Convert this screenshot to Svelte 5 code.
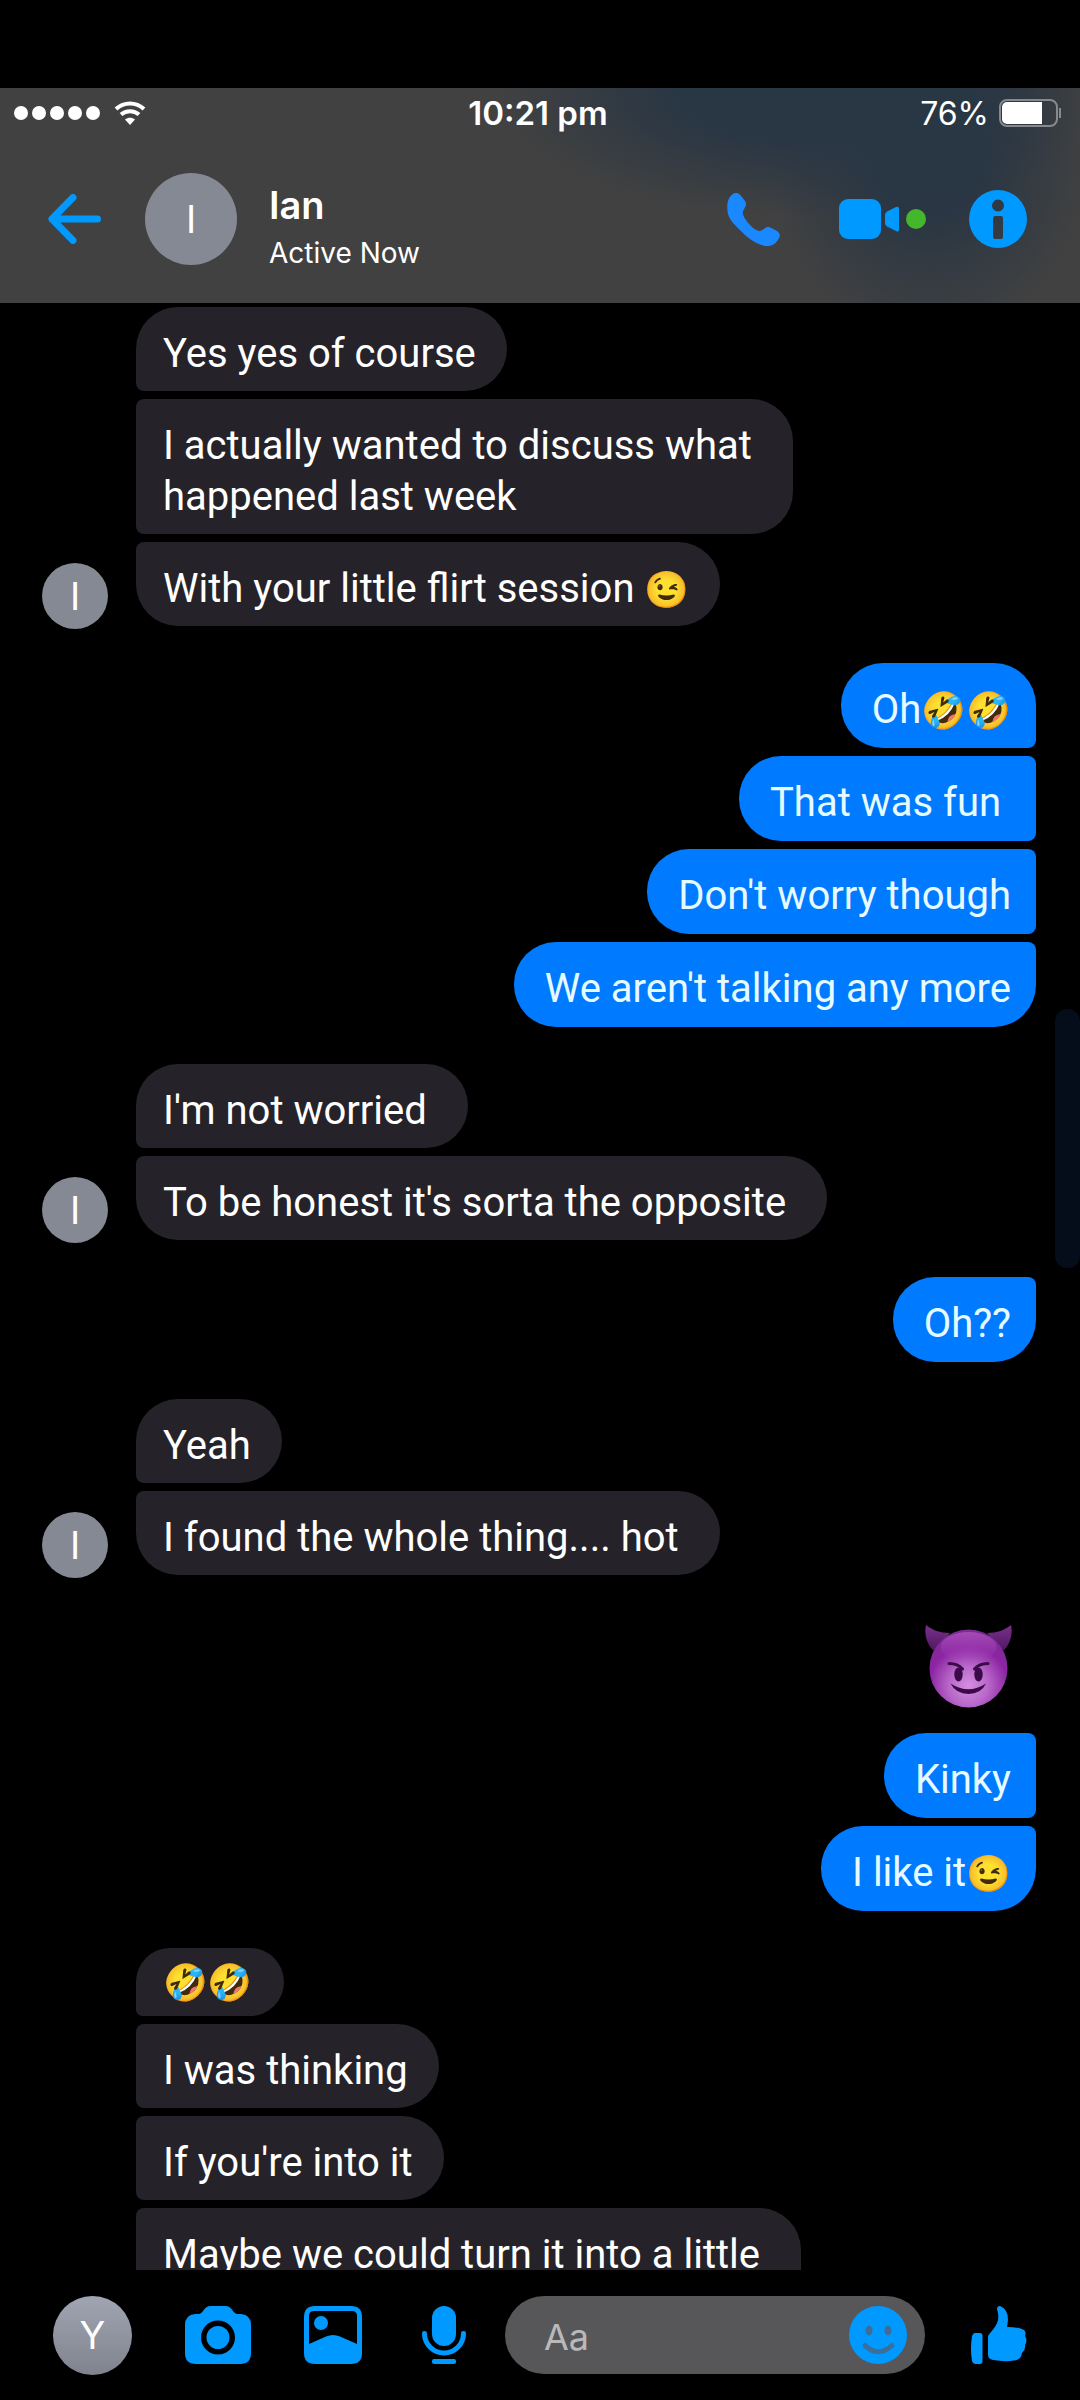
<script lang="ts">
  type Message = { text: string; kind?: 'emoji' | 'devil' };
  type Group = { from: 'them' | 'me'; avatar?: boolean; messages: Message[] };

  const contact = { name: 'Ian', initial: 'I', status: 'Active Now' };
  const battery = 76;

  let draft = $state('');

  const groups: Group[] = [
    {
      from: 'them',
      avatar: true,
      messages: [
        { text: 'Yes yes of course' },
        { text: 'I actually wanted to discuss what \nhappened last week' },
        { text: 'With your little flirt session 😉' }
      ]
    },
    {
      from: 'me',
      messages: [
        { text: 'Oh🤣🤣' },
        { text: 'That was fun ' },
        { text: "Don't worry though" },
        { text: "We aren't talking any more" }
      ]
    },
    {
      from: 'them',
      avatar: true,
      messages: [
        { text: "I'm not worried " },
        { text: "To be honest it's sorta the opposite " }
      ]
    },
    { from: 'me', messages: [{ text: 'Oh??' }] },
    {
      from: 'them',
      avatar: true,
      messages: [{ text: 'Yeah' }, { text: 'I found the whole thing.... hot ' }]
    },
    {
      from: 'me',
      messages: [{ text: '😈', kind: 'devil' }, { text: 'Kinky' }, { text: 'I like it😉' }]
    },
    {
      from: 'them',
      messages: [
        { text: '🤣🤣', kind: 'emoji' },
        { text: 'I was thinking' },
        { text: "If you're into it" },
        { text: 'Maybe we could turn it into a little \n ' }
      ]
    }
  ];

  // odd entries are the emoji, the rest is plain text
  function splitEmoji(text: string) {
    return text.split(/(\p{Extended_Pictographic}+)/u);
  }
</script>

<div class="phone">
  <header>
    <div class="statusbar">
      <div class="signal">
        {#each Array(5) as _, i (i)}
          <span class="dot"></span>
        {/each}
        <svg class="wifi" width="32" height="25" viewBox="0 0 32 25">
          <path d="M2 8C10 0.5 22 0.500 30 8" />
          <path d="M7 13.500C12 9 20 9 25 13.500" />
          <path class="fan" d="M11 18.500C14 16 18 16 21 18.500L16 24Z" />
        </svg>
      </div>
      <time>10:21 pm</time>
      <div class="power">
        <span>{battery}%</span>
        <span class="battery"><span class="charge" style="width: {battery}%"></span></span>
      </div>
    </div>

    <div class="topbar">
      <button class="back" aria-label="Back">
        <svg width="53" height="50" viewBox="0 0 53 50">
          <path d="M49.500 25H4M25 3.500L4 25L25 46.500" />
        </svg>
      </button>
      <span class="avatar large">{contact.initial}</span>
      <div class="who">
        <h1>{contact.name}</h1>
        <p>{contact.status}</p>
      </div>
      <button class="call" aria-label="Call">
        <svg width="53" height="53" viewBox="0 0 53 53">
          <path d="M1 21C-1 12 1 4 6 1C9 -1 12 0 14 3L18 8C20 11 19 13 16.500 17C15 20 16 23 19 27C23 33 28 37 32 38C35 38.500 37 35 40 34C42 33.500 44 34.500 50 38C53 40 53.500 43 52 45C49 51 45 53 41 53C33 53 24 48 16 40C8 32 3 28 1 21Z" />
        </svg>
      </button>
      <button class="video" aria-label="Video call">
        <svg width="60" height="40" viewBox="0 0 60 40">
          <rect width="42" height="40" rx="9" />
          <path d="M46 16Q46 14 48 12.500L57 8Q60 7 60 10V30Q60 34 57 32L48 27.500Q46 26 46 24Z" />
        </svg>
        <span class="online"></span>
      </button>
      <button class="info" aria-label="Conversation info">
        <svg width="58" height="58" viewBox="0 0 58 58">
          <path fill-rule="evenodd" d="M29 0A29 29 0 0 1 29 58A29 29 0 0 1 29 0ZM29 9.500A6 6 0 0 0 29 21.500A6 6 0 0 0 29 9.500ZM26 26Q24 26 24 28V47Q24 49 26 49H32Q34 49 34 47V28Q34 26 32 26Z" />
        </svg>
      </button>
    </div>
  </header>

  <main>
    {#each groups as group, g (g)}
      <section class="group {group.from}">
        {#if group.avatar}
          <span class="avatar small">{contact.initial}</span>
        {/if}
        <div class="bubbles">
          {#each group.messages as message, m (m)}
            {#if message.kind === 'devil'}
              <div class="sticker">
                <svg width="87" height="83" viewBox="0 0 87 83" role="img" aria-label={message.text}>
                  <defs>
                    <radialGradient id="skin" cx="0.5" cy="0.72" r="0.72">
                      <stop offset="0" stop-color="#d68ee0" />
                      <stop offset="0.35" stop-color="#b868c9" />
                      <stop offset="0.7" stop-color="#8c25a3" />
                      <stop offset="1" stop-color="#7d2a92" />
                    </radialGradient>
                    <linearGradient id="shine" x1="0" y1="0" x2="0" y2="1">
                      <stop offset="0" stop-color="#a94fba" stop-opacity="0.9" />
                      <stop offset="1" stop-color="#a33cb5" stop-opacity="0" />
                    </linearGradient>
                    <linearGradient id="horn" x1="0" y1="0" x2="0" y2="1">
                      <stop offset="0" stop-color="#7a3189" />
                      <stop offset="1" stop-color="#4f1763" />
                    </linearGradient>
                  </defs>
                  <path fill="url(#horn)" d="M1 0C7 5 15 8 25 8L9 26C2 20 -1 10 1 0Z" />
                  <path fill="url(#horn)" d="M86 0C80 5 72 8 62 8L78 26C85 20 88 10 86 0Z" />
                  <circle cx="43.500" cy="43.500" r="39" fill="url(#skin)" />
                  <ellipse cx="43.500" cy="22" rx="28" ry="15" fill="url(#shine)" />
                  <ellipse class="ink" cx="33.500" cy="49.500" rx="4.200" ry="7" />
                  <ellipse class="ink" cx="53.500" cy="49.500" rx="4.200" ry="7" />
                  <path class="brow" d="M24 38.500Q33 38.500 37.500 44M63 38.500Q54 38.500 49.500 44" />
                  <path class="ink" d="M25.500 58.500Q43.500 70 61 58.500Q56 69 43.500 69T25.500 58.500Z" />
                </svg>
              </div>
            {:else}
              <p class="bubble {message.kind ?? ''}">
                {#each splitEmoji(message.text) as part, i (i)}{#if i % 2}<span class="glyph">{part}</span>{:else}{part}{/if}{/each}
              </p>
            {/if}
          {/each}
        </div>
      </section>
    {/each}
    <span class="thumb"></span>
  </main>

  <footer>
    <span class="avatar own">Y</span>
    <button class="camera" aria-label="Camera">
      <svg width="66" height="58" viewBox="0 0 66 58">
        <path fill-rule="evenodd" d="M10 8H13C19 8 18 0 26 0H40C48 0 47 8 53 8H56Q66 9 66 19V47Q66 58 55 58H11Q0 58 0 47V19Q0 9 10 8ZM33 14.500A17 17 0 0 0 33 48.500A17 17 0 0 0 33 14.500Z" />
        <circle cx="33" cy="31.500" r="11.500" />
      </svg>
    </button>
    <button class="gallery" aria-label="Photos">
      <svg width="58" height="58" viewBox="0 0 58 58">
        <path fill-rule="evenodd" d="M11 0H47Q58 0 58 11V47Q58 58 47 58H11Q0 58 0 47V11Q0 0 11 0ZM10 5Q5 5 5 10V38L22 30.500Q29 27.500 36 30.500L53 38V10Q53 5 48 5Z" />
        <circle cx="17" cy="17" r="7" />
      </svg>
    </button>
    <button class="mic" aria-label="Voice message">
      <svg width="44" height="58" viewBox="0 0 44 58">
        <rect x="10" width="24" height="40" rx="12" />
        <path class="line" d="M2.500 27.500A19.500 19.500 0 0 0 41.500 27.500" />
        <rect x="10" y="53" width="24" height="5" rx="2" />
      </svg>
    </button>
    <div class="field">
      <input type="text" bind:value={draft} placeholder="Aa" aria-label="Message" />
      <button class="smile" aria-label="Emoji">
        <svg width="58" height="58" viewBox="0 0 58 58">
          <circle cx="29" cy="29" r="29" />
          <ellipse class="face" cx="20" cy="24.500" rx="3.500" ry="5" />
          <ellipse class="face" cx="39" cy="24.500" rx="3.500" ry="5" />
          <path class="mouth" d="M16 39.500Q29 52 43 39.500" />
        </svg>
      </button>
    </div>
    <button class="like" aria-label="Like">
      <svg width="56" height="58" viewBox="0 0 56 58">
        <path d="M4 27H9Q11.500 27 11.500 30V55Q11.500 58 9 58H4Q2 58 1 55Q-1 43 1 30Q2 27 4 27Z" />
        <path d="M26 3Q26 0 29 0Q37 3 37 14L36 21Q45 21 51 23Q56 25 54 30Q57 34 54 39Q55 43 51 47Q50 54 43 54.500Q33 56 22 54Q17 53 17 49V31Q17 29 20 26Q26 19 27 14Q28 9 26 3Z" />
      </svg>
    </button>
  </footer>
</div>

<style>
  :global(body) {
    background: #000;
  }

  .phone {
    box-sizing: border-box;
    display: flex;
    flex-direction: column;
    height: 100vh;
    padding-top: 88px;
    background: #000;
    color: #fff;
    font-family: Inter, 'Liberation Sans', 'Noto Color Emoji', sans-serif;
  }

  button {
    display: flex;
    align-items: center;
    flex: none;
    margin: 0;
    padding: 0;
    border: none;
    background: none;
    color: inherit;
    cursor: pointer;
  }

  svg {
    display: block;
    flex: none;
    fill: #0099ff;
  }

  header {
    flex: none;
    padding-bottom: 3px;
    background:
      radial-gradient(ellipse 28% 60% at 74% 0%, #293644 40%, transparent 100%),
      radial-gradient(ellipse 15% 90% at 86% 28%, #2a3643 35%, transparent 100%),
      #414141;
  }

  .statusbar {
    display: grid;
    grid-template-columns: 1fr auto 1fr;
    align-items: center;
    height: 50px;
    padding: 0 18px 0 14px;
    font-size: 32px;
  }

  .signal {
    display: flex;
    align-items: center;
    gap: 4px;
  }

  .dot {
    width: 14px;
    height: 14px;
    border-radius: 50%;
    background: #fff;
  }

  .wifi {
    margin-left: 10px;
    fill: none;
    stroke: #fff;
    stroke-width: 4;
  }

  .wifi .fan {
    fill: #fff;
    stroke: none;
  }

  time {
    font-size: 33px;
    font-weight: 600;
  }

  .power {
    display: flex;
    align-items: center;
    justify-content: flex-end;
    gap: 10px;
  }

  .battery {
    position: relative;
    box-sizing: border-box;
    width: 59px;
    height: 28px;
    margin-right: 4px;
    padding: 1px;
    border: 2px solid #87898c;
    border-radius: 8px;
  }

  .battery::after {
    content: '';
    position: absolute;
    top: 7px;
    right: -5px;
    width: 2px;
    height: 10px;
    background: #87898c;
  }

  .charge {
    display: block;
    height: 100%;
    border-radius: 5px 0 0 5px;
    background: #fff;
  }

  .topbar {
    display: flex;
    align-items: center;
    height: 162px;
    padding: 0 53px 0 48px;
  }

  .back path {
    fill: none;
    stroke: #0099ff;
    stroke-width: 7;
    stroke-linecap: round;
    stroke-linejoin: round;
  }

  .avatar {
    display: flex;
    align-items: center;
    justify-content: center;
    flex: none;
    border-radius: 50%;
    background: #858994;
    font-size: 38px;
  }

  .avatar.large {
    width: 92px;
    height: 92px;
    margin: 0 32px 0 44px;
  }

  .who {
    flex: 1;
    padding-top: 16px;
  }

  h1,
  p {
    margin: 0;
  }

  h1 {
    font-size: 38px;
    font-weight: 600;
    line-height: 44px;
  }

  .who p {
    margin-top: 8px;
    font-size: 28px;
    line-height: 36px;
  }

  .call svg {
    fill: #1a88ff;
  }

  .video {
    gap: 7px;
    margin: 0 43px 0 59px;
  }

  .online {
    width: 20px;
    height: 20px;
    border-radius: 50%;
    background: #44b72c;
  }

  main {
    position: relative;
    display: flex;
    flex: 1;
    flex-direction: column;
    gap: 37px;
    min-height: 0;
    overflow: hidden;
    padding: 4px 44px 0 42px;
  }

  .group {
    display: flex;
    align-items: flex-end;
    flex: none;
  }

  .bubbles {
    display: flex;
    flex: 1;
    flex-direction: column;
    align-items: flex-start;
    gap: 8px;
  }

  .them .bubbles {
    padding-left: 94px;
  }

  .me .bubbles {
    align-items: flex-end;
  }

  .avatar.small {
    width: 66px;
    height: 66px;
    margin: 0 -66px -3px 0;
  }

  .bubble {
    box-sizing: border-box;
    padding: 21px 31px 12px 27px;
    border-radius: 8px 42px 42px 8px;
    background: #252329;
    font-family: Roboto, 'Liberation Sans', 'Noto Color Emoji', sans-serif;
    font-size: 40px;
    line-height: 51px;
    white-space: break-spaces;
  }

  .bubble:first-child {
    border-top-left-radius: 42px;
  }

  .bubble:last-child {
    border-bottom-left-radius: 42px;
  }

  .glyph {
    font-size: 36px;
    line-height: 36px;
  }

  .me .bubble {
    padding: 21px 25px 13px 31px;
    border-radius: 42px 8px 8px 42px;
    background: #007aff;
    color: #e6fbff;
  }

  .me .bubble:first-child:not(:only-child) {
    border-top-right-radius: 42px;
  }

  .me .bubble:last-child {
    border-bottom-right-radius: 42px;
  }

  .them .bubble.emoji {
    padding: 8px 31px 9px 27px;
  }

  .sticker {
    padding: 13px 24px 17px;
  }

  .ink {
    fill: #3a0b48;
  }

  .brow {
    fill: none;
    stroke: #3a0b48;
    stroke-width: 3;
    stroke-linecap: round;
  }

  .thumb {
    position: absolute;
    top: 706px;
    right: 0;
    width: 25px;
    height: 259px;
    border-radius: 12px;
    background: #050c1a;
  }

  footer {
    display: flex;
    align-items: center;
    flex: none;
    height: 130px;
    padding: 0 53px;
  }

  .avatar.own {
    width: 79px;
    height: 79px;
    background: linear-gradient(#a0a5b2, #80838d);
  }

  .camera {
    margin: 0 53px;
  }

  .mic {
    margin: 0 39px 0 60px;
  }

  .line {
    fill: none;
    stroke: #0099ff;
    stroke-width: 5;
    stroke-linecap: round;
  }

  .field {
    box-sizing: border-box;
    display: flex;
    align-items: center;
    flex: 1;
    min-width: 0;
    height: 78px;
    margin-right: 46px;
    padding: 0 18px 0 39px;
    border-radius: 39px;
    background: #575759;
  }

  .field input {
    flex: 1;
    min-width: 0;
    padding: 4px 0 0;
    border: none;
    outline: none;
    background: none;
    color: #fff;
    font: inherit;
    font-size: 36px;
  }

  .field input::placeholder {
    color: #b9b9bb;
    opacity: 1;
  }

  .face {
    fill: #3c6e99;
  }

  .mouth {
    fill: none;
    stroke: #3c6e99;
    stroke-width: 5;
    stroke-linecap: round;
  }
</style>
